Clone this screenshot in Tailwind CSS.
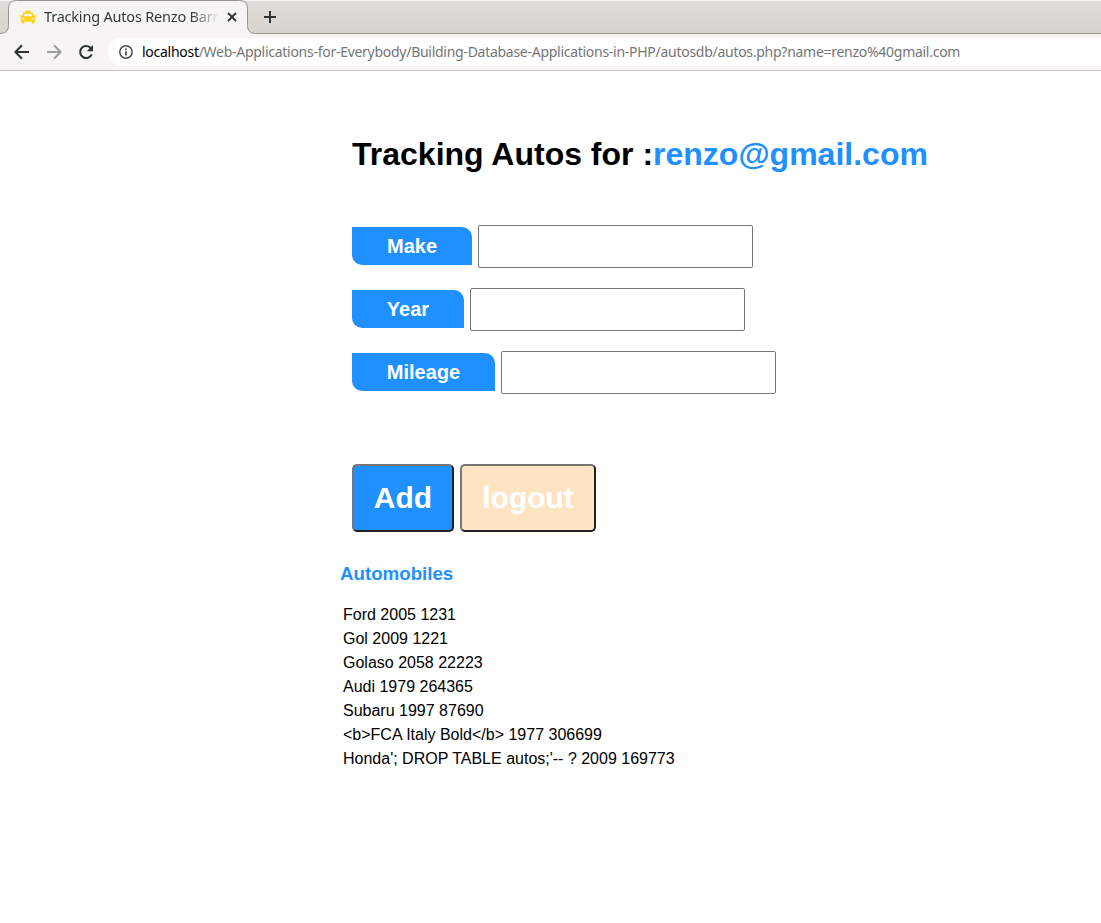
<!DOCTYPE html>
<html lang="en">
<head>
<meta charset="utf-8">
<title>Tracking Autos Renzo Barrios</title>
<script src="https://cdn.jsdelivr.net/npm/@tailwindcss/browser@4"></script>
</head>
<body class="h-[923px] w-[1101px] overflow-hidden bg-white font-['Liberation_Sans',Arial,sans-serif] text-black">
<header class="font-['Noto_Sans',sans-serif]">
  <div class="relative h-[34px] bg-gradient-to-b from-[#e0ddd9] to-[#d7d3ce]">
    <svg class="absolute inset-0" width="1101" height="34" viewBox="0 0 1101 34" fill="none">
      <path d="M0 .5H1101" stroke="#f4f2f0"/>
      <path d="M0 34V33.5C6 33.500 8.500 31 8.500 25.500V8.500Q8.500.5 16.500.5H239.500Q247.500.5 247.500 8.500V25.500Q247.500 33.500 255.500 33.500V34Z" fill="#f6f5f3"/>
      <path d="M0 33.500Q8.500 33.500 8.500 25.500V8.500Q8.500.5 16.500.5H239.500Q247.500.5 247.500 8.500V25.500Q247.500 33.500 255.500 33.500H1101" stroke="#979490"/>
    </svg>
    <div class="relative flex h-[34px] items-center pl-5">
      <svg width="16" height="14" viewBox="0 0 16 14" fill="#fcd116">
        <path fill-rule="evenodd" d="M5.500.5h5v1.700h1c.7 0 1.100.3 1.300.9l.8 2.200H15.700v1.400h-1.200c.5.4.7.9.7 1.500v2.300c0 .5-.2.8-.6 1v1.300c0 .4-.3.7-.7.700h-1.500a.7.7 0 0 1-.7-.7v-1.100H4.300v1.100c0 .4-.3.7-.7.700H2.100a.7.7 0 0 1-.7-.7v-1.300c-.4-.2-.6-.5-.6-1V8.200c0-.6.2-1.100.7-1.500H.3V5.300h2.100l.8-2.200c.2-.6.6-.9 1.300-.9h1zM4.700 3.700l-.8 2.500h8.200l-.8-2.500zM3.300 7.900a1 1 0 1 0 0 2 1 1 0 0 0 0-2m9.400 0a1 1 0 1 0 0 2 1 1 0 0 0 0-2"/>
      </svg>
      <div class="mb-0.5 ml-2 w-[175px] bg-gradient-to-r from-[#303638] from-[84%] to-transparent bg-clip-text whitespace-nowrap text-[14.5px] leading-5 tracking-[-0.2px] text-transparent">Tracking Autos Renzo Barr</div>
      <svg class="ml-2" width="10" height="10" viewBox="0 0 10 10" stroke="#2e3436" stroke-width="1.800"><path d="M1 1l8 8M9 1L1 9"/></svg>
      <svg class="ml-[27px]" width="12" height="12" viewBox="0 0 12 12" stroke="#2e3436" stroke-width="2"><path d="M6 0v12M0 6h12"/></svg>
    </div>
  </div>
  <div class="flex h-[37px] items-center border-b border-[#c6c1ba] bg-[#f6f5f3] pl-[14px]">
    <svg width="16" height="16" viewBox="0 0 16 16" fill="none" stroke="#2e3436" stroke-width="2"><path d="M15 8H2.500M8 1.300L1.400 8L8 14.700"/></svg>
    <svg class="ml-4" width="16" height="16" viewBox="0 0 16 16" fill="none" stroke="#9b9c9b" stroke-width="2"><path d="M1 8h12.500M8 1.300L14.600 8L8 14.700"/></svg>
    <svg class="ml-4" width="16" height="16" viewBox="0 0 16 16"><path d="M13.700 10.300A6 6 0 1 1 12.300 3.700L13.700 5" fill="none" stroke="#2e3436" stroke-width="2.100"/><path d="M15 1v6.200H8.800z" fill="#2e3436"/></svg>
    <div class="ml-[14px] flex h-7 flex-1 items-center rounded-l-full bg-white pl-[11px]">
      <svg width="14" height="14" viewBox="0 0 14 14" fill="none" stroke="#4b5052"><circle cx="7" cy="7" r="6.200" stroke-width="1.500"/><path d="M7 6.200v4.300M7 3.400v1.600" stroke-width="1.800"/></svg>
      <div class="ml-[9px] whitespace-nowrap text-[14px] leading-5 tracking-[-0.275px] text-[#757575]"><span class="text-black">localhost</span>/Web-Applications-for-Everybody/Building-Database-Applications-in-PHP/autosdb/autos.php?name=renzo%40gmail.com</div>
    </div>
  </div>
</header>
<main class="pl-[340px]">
  <h1 class="pt-[65px] pl-3 text-[32px] leading-9 font-bold whitespace-nowrap">Tracking Autos for :<span class="text-[#1e90ff]">renzo@gmail.com</span></h1>
  <form class="mt-[53px] flex flex-col gap-5 pl-3">
    <div class="flex items-start gap-1.5">
      <label for="make" class="mt-0.5 flex h-[38px] w-[120px] items-center justify-center rounded-tr-[10px] rounded-bl-[10px] bg-[#1e90ff] text-xl font-bold text-white">Make</label>
      <input id="make" class="h-[43px] w-[275px] rounded-[2px] border border-[#767676] bg-white">
    </div>
    <div class="flex items-start gap-1.5">
      <label for="year" class="mt-0.5 flex h-[38px] w-[112px] items-center justify-center rounded-tr-[10px] rounded-bl-[10px] bg-[#1e90ff] text-xl font-bold text-white">Year</label>
      <input id="year" class="h-[43px] w-[275px] rounded-[2px] border border-[#767676] bg-white">
    </div>
    <div class="flex items-start gap-1.5">
      <label for="mileage" class="mt-0.5 flex h-[38px] w-[143px] items-center justify-center rounded-tr-[10px] rounded-bl-[10px] bg-[#1e90ff] text-xl font-bold text-white">Mileage</label>
      <input id="mileage" class="h-[43px] w-[275px] rounded-[2px] border border-[#767676] bg-white">
    </div>
    <div class="mt-[50px] flex gap-1.5">
      <button type="button" class="h-[68px] w-[102px] rounded-[5px] border-2 border-t-[#767676] border-r-[#212121] border-b-[#212121] border-l-[#767676] bg-[#1e90ff] pb-0.5 text-[30px] font-bold text-white">Add</button>
      <button type="button" class="h-[68px] w-[136px] rounded-[5px] border-2 border-t-[#767676] border-r-[#212121] border-b-[#212121] border-l-[#767676] bg-[#ffe4c4] pb-0.5 text-[30px] font-bold text-white">logout</button>
    </div>
  </form>
  <h2 class="mt-[31px] text-[18.720px] leading-[22px] font-bold text-[#1e90ff]">Automobiles</h2>
  <ul class="mt-[18px] pl-[3px] text-base leading-6 whitespace-nowrap">
    <li>Ford 2005 1231</li>
    <li>Gol 2009 1221</li>
    <li>Golaso 2058 22223</li>
    <li>Audi 1979 264365</li>
    <li>Subaru 1997 87690</li>
    <li>&lt;b&gt;FCA Italy Bold&lt;/b&gt; 1977 306699</li>
    <li>Honda'; DROP TABLE autos;'-- ? 2009 169773</li>
  </ul>
</main>
</body>
</html>
